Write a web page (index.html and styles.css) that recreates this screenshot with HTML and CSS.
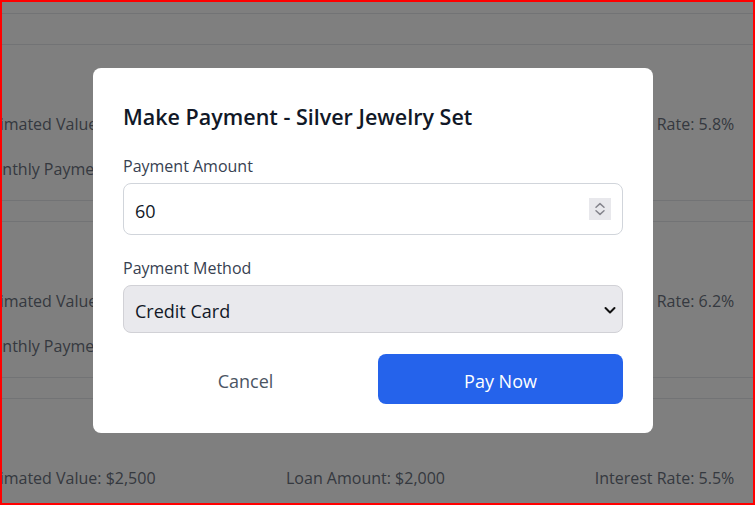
FILE: index.html
```html
<!DOCTYPE html>
<html lang="en">
<head>
<meta charset="utf-8">
<title>Make Payment</title>
<link rel="stylesheet" href="styles.css">
</head>
<body>
<div class="page">
  <div class="list">
    <div class="list-head"></div>

    <section class="loan">
      <div class="row">
        <span>Estimated Value: $3,200</span>
        <span>Loan Amount: $2,400</span>
        <span>Interest Rate: 5.8%</span>
      </div>
      <div class="row">
        <span>Monthly Payment: $210</span>
      </div>
    </section>

    <section class="loan">
      <div class="row">
        <span>Estimated Value: $4,800</span>
        <span>Loan Amount: $3,500</span>
        <span>Interest Rate: 6.2%</span>
      </div>
      <div class="row">
        <span>Monthly Payment: $305</span>
      </div>
    </section>

    <section class="loan">
      <div class="row">
        <span>Estimated Value: $2,500</span>
        <span>Loan Amount: $2,000</span>
        <span>Interest Rate: 5.5%</span>
      </div>
      <div class="row">
        <span>Monthly Payment: $175</span>
      </div>
    </section>
  </div>

  <div class="overlay">
    <div class="modal">
      <h2 class="modal-title">Make Payment - Silver Jewelry Set</h2>

      <div class="field">
        <label class="field-label" for="amount">Payment Amount</label>
        <div class="control">
          <input id="amount" class="control-input" type="text" value="60">
          <span class="spinner">
            <svg width="22" height="22" viewBox="0 0 22 22" fill="none" stroke="#85858d" stroke-width="1.5" stroke-linecap="round" stroke-linejoin="round">
              <path d="M7 9.2 L11 5.6 L15 9.2"/>
              <path d="M7 12.8 L11 16.4 L15 12.8"/>
            </svg>
          </span>
        </div>
      </div>

      <div class="field">
        <label class="field-label" for="method">Payment Method</label>
        <div class="control control-select">
          <span id="method" class="control-value">Credit Card</span>
          <svg class="chevron" width="14" height="14" viewBox="0 0 14 14" fill="none" stroke="#111" stroke-width="2" stroke-linecap="round" stroke-linejoin="round">
            <path d="M2.5 5 L7 9.5 L11.5 5"/>
          </svg>
        </div>
      </div>

      <div class="actions">
        <button class="btn btn-cancel" type="button">Cancel</button>
        <button class="btn btn-pay" type="button">Pay Now</button>
      </div>
    </div>
  </div>
</div>
</body>
</html>
```

FILE: styles.css
```css
* {
  box-sizing: border-box;
}

html, body {
  margin: 0;
  padding: 0;
}

body {
  font-family: "Open Sans", "Noto Sans", sans-serif;
  color: #111827;
  background: #ffffff;
}

.page {
  position: relative;
  height: 505px;
  border: 2px solid #ff0000;
  overflow: hidden;
}

.list-head {
  height: 12px;
  border-bottom: 1px solid #e5e7eb;
  margin-bottom: 30px;
}

.loan {
  border-top: 1px solid #e5e7eb;
  border-bottom: 1px solid #e5e7eb;
  padding: 67px 0 19px;
  margin-bottom: 20px;
}

.row {
  display: grid;
  grid-template-columns: repeat(3, 299px);
  justify-items: center;
  margin-left: -85px;
  font-size: 16px;
  line-height: 24px;
  color: #6b7280;
  white-space: nowrap;
}

.row + .row {
  margin-top: 21px;
}

.overlay {
  position: absolute;
  inset: 0;
  background: rgba(0, 0, 0, 0.5);
  display: flex;
  align-items: flex-start;
  padding: 66px 0 0 91px;
}

.modal {
  width: 560px;
  background: #ffffff;
  border-radius: 8px;
  padding: 30px 30px 29px;
}

.modal-title {
  margin: 0 0 20px;
  padding-top: 1px;
  height: 36px;
  font-size: 21.5px;
  line-height: 36px;
  font-weight: 600;
  color: #111827;
}

.field {
  margin-bottom: 21px;
}

.field-label {
  display: block;
  font-size: 16px;
  line-height: 24px;
  color: #374151;
  margin-bottom: 5px;
}

.control {
  display: flex;
  align-items: center;
  height: 52px;
  border: 1px solid #d1d5db;
  border-radius: 8px;
  padding: 0 11px 0 11px;
  background: #ffffff;
}

.control-input {
  flex: 1;
  min-width: 0;
  border: 0;
  outline: none;
  padding: 3px 0 0;
  font-family: inherit;
  font-size: 18px;
  color: #111827;
  background: transparent;
}

.spinner {
  display: flex;
  width: 22px;
  height: 22px;
  background: #e8e8ec;
}

.control-select {
  height: 48px;
  background: #e9e9ed;
  border-color: #d1d1d6;
  justify-content: space-between;
  padding-right: 5px;
}

.control-value {
  font-size: 18px;
  padding-top: 3px;
  color: #111827;
}

.chevron {
  margin-top: 1px;
}

.actions {
  display: flex;
  gap: 10px;
}

.btn {
  flex: 1;
  height: 50px;
  border: 0;
  border-radius: 8px;
  padding: 3px 0 0;
  font-family: inherit;
  font-size: 18px;
  cursor: pointer;
}

.btn-cancel {
  background: transparent;
  color: #4b5563;
}

.btn-pay {
  background: #2563eb;
  color: #ffffff;
}
```
